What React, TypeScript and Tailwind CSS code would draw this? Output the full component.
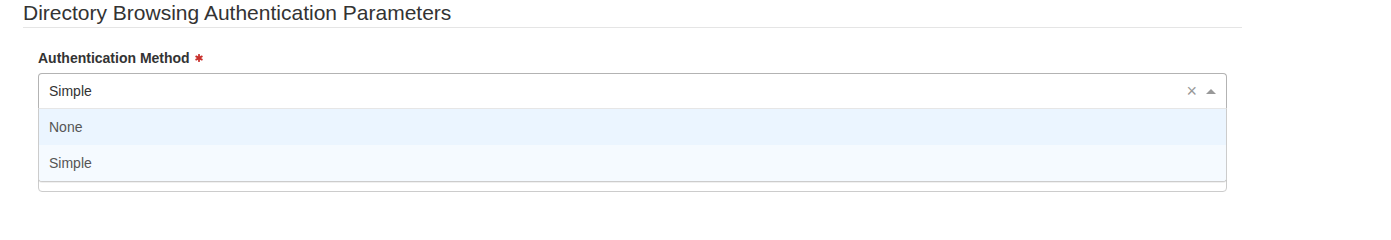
import React from 'react';

const font = { fontFamily: '"Liberation Sans", Arial, sans-serif' };

function RequiredMark() {
    return (
        <svg width="8" height="8" viewBox="0 0 8 8" className="ml-[5px] inline-block">
            <g stroke="#c9302c" strokeWidth="1.8" strokeLinecap="round">
                <line x1="4" y1="0.8" x2="4" y2="7.2" />
                <line x1="1.2" y1="2.4" x2="6.8" y2="5.6" />
                <line x1="1.2" y1="5.6" x2="6.8" y2="2.4" />
            </g>
        </svg>
    );
}

const options = [
    { label: 'None', focused: true },
    { label: 'Simple', focused: false },
];

export default function App() {
    return (
        <div className="w-[1391px] h-[210px] overflow-hidden bg-white text-[#333]" style={font}>
            <div className="w-[1219px] ml-[23px]">
                <h3 className="text-[21px] leading-[23px] pt-[1px] pb-[3px] border-b border-[#e5e5e5] font-normal">
                    Directory Browsing Authentication Parameters
                </h3>

                <div className="px-[15px] pt-[20px]">
                    <div className="flex items-center h-[20px] mb-[5px] text-[14px] font-bold">
                        Authentication Method
                        <RequiredMark />
                    </div>

                    <div className="relative">
                        <div className="flex items-center h-[36px] border border-[#b3b3b3] border-b-[#d9d9d9] rounded-t-[4px] bg-white">
                            <span className="flex-1 pl-[10px] text-[14px]">Simple</span>
                            <span className="text-[18px] leading-none text-[#999] mr-[9px] -mt-[1px]">×</span>
                            <span className="w-0 h-0 border-x-[5px] border-x-transparent border-b-[5px] border-b-[#999] mr-[10px]" />
                        </div>

                        <div className="absolute left-0 right-0 top-full -mt-[1px] z-10 bg-white border border-[#ccc] border-t-[#e6e6e6] rounded-b-[4px] shadow-[0_1px_0_rgba(0,0,0,0.06)] overflow-hidden">
                            {options.map((o) => (
                                <div
                                    key={o.label}
                                    className={`h-[36px] flex items-center pl-[10px] text-[14px] text-[#555] ${o.focused ? 'bg-[#ebf5ff]' : 'bg-[#f5faff]'}`}
                                >
                                    {o.label}
                                </div>
                            ))}
                        </div>
                    </div>

                    {/* next field, hidden under the open menu */}
                    <div className="pt-[49px]">
                        <div className="h-[34px] border border-[#ccc] rounded-[4px]" />
                    </div>
                </div>
            </div>
        </div>
    );
}
